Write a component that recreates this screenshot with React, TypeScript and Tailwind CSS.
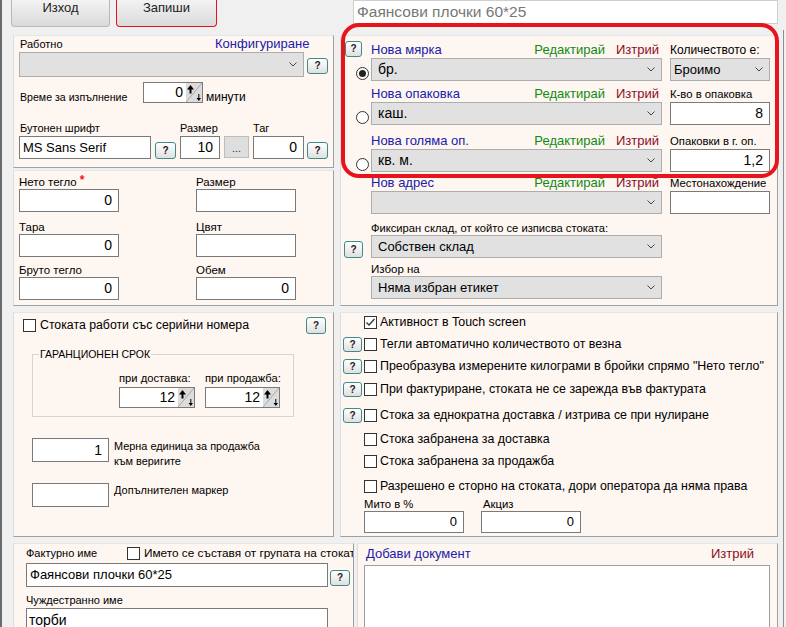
import React from 'react'

const FONT = "font-['Liberation_Sans',Arial,sans-serif]"
const BLUE = 'text-[#2020a8]'
const GREEN = 'text-[#128a12]'
const MAROON = 'text-[#8e0d24]'

function Help({ className = '' }: { className?: string }) {
  return (
    <div
      className={`flex shrink-0 items-center justify-center rounded-[3px] border border-[#3d8b8b] bg-linear-to-b from-white to-[#e0e0e0] text-[10px] font-bold leading-none text-[#222] ${className}`}
    >
      ?
    </div>
  )
}

function Chevron() {
  return (
    <svg width="8" height="5" viewBox="0 0 8 5" className="shrink-0">
      <path d="M0.5 0.5L4 4L7.5 0.5" fill="none" stroke="#444" strokeWidth="1" />
    </svg>
  )
}

function Select({
  value = '',
  className = '',
  text = 'text-[14px]',
  pad = 'pl-[6px]',
}: {
  value?: string
  className?: string
  text?: string
  pad?: string
}) {
  return (
    <div className={`flex items-center border border-[#adadad] bg-[#e1e1e1] pr-[6px] text-black ${pad} ${className}`}>
      <span className={`flex-1 truncate ${text}`}>{value}</span>
      <Chevron />
    </div>
  )
}

function Field({ value = '', className = '', text = 'text-[13px]' }: { value?: string; className?: string; text?: string }) {
  return (
    <div className={`flex items-center justify-end border border-[#7a7a7a] bg-white pr-[6px] text-black ${text} ${className}`}>
      {value}
    </div>
  )
}

function SpinIcon() {
  return (
    <svg width="16" height="19" viewBox="0 0 16 19" className="shrink-0">
      <rect x="0" y="0" width="16" height="19" fill="#dcdcdc" />
      <path d="M0 19L16 0" stroke="#a8a8a8" strokeWidth="1" />
      <path d="M4.5 2L1 6.5H3.5V10.5H5.5V6.5H8Z" fill="#000" />
      <path d="M12.3 11V15H10.5L12.8 18L15 15H13.3V11Z" fill="#000" />
    </svg>
  )
}

function Spinner({ value, className = '' }: { value: string; className?: string }) {
  return (
    <div className={`flex items-center border border-[#7a7a7a] bg-white ${className}`}>
      <span className="flex-1 pr-[3px] text-right text-[14px] text-black">{value}</span>
      <SpinIcon />
    </div>
  )
}

function Check({ checked = false }: { checked?: boolean }) {
  return (
    <div className="flex h-[13px] w-[13px] shrink-0 items-center justify-center border border-[#333] bg-white">
      {checked && (
        <svg width="11" height="11" viewBox="0 0 11 11">
          <path d="M1.5 5.5L4 8L9.5 2" fill="none" stroke="#333" strokeWidth="1.3" />
        </svg>
      )}
    </div>
  )
}

function Radio({ checked = false }: { checked?: boolean }) {
  return (
    <div className="flex h-[13px] w-[13px] shrink-0 items-center justify-center rounded-full border border-[#333] bg-white">
      {checked && <div className="h-[7px] w-[7px] rounded-full bg-[#222]" />}
    </div>
  )
}

function Panel({ className = '', children }: { className?: string; children?: React.ReactNode }) {
  return (
    <div
      className={`border border-t-[#e6e6e6] border-l-[#dcdcdc] border-r-[#a0a0a0] border-b-[#a0a0a0] bg-[#fdf6f1] ${className}`}
    >
      {children}
    </div>
  )
}

function UnitLabels({ name, right, helpCell, rightSize = 'text-[11.3px]' }: { name: string; right: string; helpCell?: boolean; rightSize?: string }) {
  return (
    <div className="flex h-[16px]">
      <div className="w-[30px]">{helpCell && <Help className="ml-[4px] mt-[-1px] h-[16px] w-[17px]" />}</div>
      <div className="flex w-[291px] leading-[16px]">
        <span className={`flex-1 text-[13px] ${BLUE}`}>{name}</span>
        <span className={`text-[13px] ${GREEN}`}>Редактирай</span>
        <span className={`ml-[11px] mr-[3px] text-[13px] ${MAROON}`}>Изтрий</span>
      </div>
      <div className={`ml-[8px] w-[100px] whitespace-nowrap leading-[16px] text-black ${rightSize}`}>{right}</div>
    </div>
  )
}

function UnitControls({ value, checked, right, radio = true }: { value: string; checked?: boolean; right: React.ReactNode; radio?: boolean }) {
  return (
    <div className="flex h-[23px]">
      <div className="flex w-[30px] items-end pb-[1px] pl-[15px]">{radio && <Radio checked={checked} />}</div>
      <Select value={value} className="h-[23px] w-[291px]" />
      <div className="ml-[8px] w-[100px]">{right}</div>
    </div>
  )
}

function CheckRow({ text, help, checked, className = '' }: { text: string; help?: boolean; checked?: boolean; className?: string }) {
  return (
    <div className={`flex h-[13px] items-center ${className}`}>
      <div className="flex w-[23px] items-center pl-[2px]">{help && <Help className="h-[15px] w-[19px]" />}</div>
      <Check checked={checked} />
      <span className="ml-[3px] whitespace-nowrap text-[12.4px] leading-none text-black">{text}</span>
    </div>
  )
}

export default function App() {
  return (
    <div className={`flex h-[627px] w-[786px] overflow-hidden bg-[#f0f0f0] text-black ${FONT}`}>
      <div className="w-[2px] shrink-0 bg-[#6b6b6b]" />
      <div className="relative w-[776px] shrink-0">
        {/* top bar */}
        <div className="flex h-[35px] items-start">
          <div className="ml-[9px] flex h-[27px] w-[99px] justify-center rounded-b-[4px] border border-t-0 border-[#b8b8b8] bg-linear-to-b from-[#f3f3f3] to-[#dadada] pt-[1px] text-[13px] leading-[14px] text-[#222]">
            Изход
          </div>
          <div className="ml-[6px] flex h-[27px] w-[101px] justify-center rounded-b-[4px] border border-t-0 border-[#e81123] bg-linear-to-b from-[#f3f3f3] to-[#dadada] pt-[1px] text-[13px] leading-[14px] text-[#222]">
            Запиши
          </div>
          <div className="ml-[136px] flex h-[24px] w-[425px] items-center border border-[#cfcfcf] bg-white pl-[3px] text-[15.5px] text-[#777]">
            Фаянсови плочки 60*25
          </div>
        </div>

        <div className="flex">
          {/* left column */}
          <div className="ml-[11px] flex w-[321px] flex-col">
            <Panel className="h-[133px]">
              <div className="flex h-[16px] pl-[6px] leading-[16px]">
                <span className="w-[195px] text-[11px]">Работно</span>
                <span className={`text-[13px] ${BLUE}`}>Конфигуриране</span>
              </div>
              <div className="flex items-start">
                <Select className="ml-[5px] h-[25px] w-[285px]" />
                <Help className="ml-[3px] mt-[6px] h-[16px] w-[21px]" />
              </div>
              <div className="mt-[5px] flex h-[21px] items-end">
                <span className="w-[129px] pl-[6px] text-[10.6px] leading-[12px]">Време за изпълнение</span>
                <Spinner value="0" className="h-[21px] w-[60px]" />
                <span className="ml-[3px] text-[12px] leading-[12px]">минути</span>
              </div>
              <div className="mt-[18px] flex h-[14px] pl-[6px] text-[11px] leading-[14px]">
                <span className="w-[160px]">Бутонен шрифт</span>
                <span className="w-[73px]">Размер</span>
                <span>Таг</span>
              </div>
              <div className="mt-[1px] flex h-[23px] items-end">
                <div className="ml-[5px] flex h-[23px] w-[132px] items-center border border-[#7a7a7a] bg-white pl-[3px] text-[13px]">
                  MS Sans Serif
                </div>
                <Help className="ml-[4px] h-[17px] w-[21px]" />
                <Field value="10" text="text-[14px]" className="ml-[4px] h-[23px] w-[40px]" />
                <div className="mb-[1px] ml-[4px] flex h-[22px] w-[25px] items-end justify-center border border-[#bdbdbd] bg-[#dedede] pb-[3px] text-[11px] leading-none text-[#333]">
                  ...
                </div>
                <Field value="0" text="text-[14px]" className="ml-[4px] h-[23px] w-[51px]" />
                <Help className="ml-[3px] h-[17px] w-[21px]" />
              </div>
            </Panel>

            <Panel className="mt-[2px] h-[136px] pt-[4px]">
              {[
                ['Нето тегло', '0', 'Размер', ''],
                ['Тара', '0', 'Цвят', ''],
                ['Бруто тегло', '0', 'Обем', '0'],
              ].map((row, i) => (
                <div key={row[0]} className={`flex ${i === 1 ? 'mt-[8px]' : i === 2 ? 'mt-[6px]' : ''}`}>
                  <div className="flex w-[182px] flex-col pl-[5px]">
                    <span className="h-[14px] text-[11.5px] leading-[14px]">
                      {row[0]}
                      {i === 0 && <span className="ml-[3px] align-top text-[12px] font-bold leading-[10px] text-[#f01818]">*</span>}
                    </span>
                    <Field value={row[1]} text="text-[14px]" className="h-[23px] w-[100px]" />
                  </div>
                  <div className="flex flex-col">
                    <span className="h-[14px] text-[11.5px] leading-[14px]">{row[2]}</span>
                    <Field value={row[3]} text="text-[14px]" className="h-[23px] w-[100px]" />
                  </div>
                </div>
              ))}
            </Panel>

            <Panel className="mt-[6px] h-[225px]">
              <div className="mt-[4px] flex h-[17px] items-center">
                <div className="ml-[9px]">
                  <Check />
                </div>
                <span className="ml-[4px] text-[12.3px]">Стоката работи със серийни номера</span>
                <Help className="ml-auto mr-[7px] h-[17px] w-[20px]" />
              </div>
              <fieldset className="ml-[18px] mt-[13px] w-[262px] border border-[#d4d4d4] pb-[8px]">
                <legend className="ml-[6px] px-[1px] text-[10.5px] leading-[14px]">ГАРАНЦИОНЕН СРОК</legend>
                <div className="mt-[10px] flex">
                  <div className="ml-[86px] flex w-[76px] flex-col">
                    <span className="h-[14px] whitespace-nowrap text-[11.2px] leading-[14px]">при доставка:</span>
                    <Spinner value="12" className="mt-[2px] h-[21px]" />
                  </div>
                  <div className="ml-[10px] flex w-[75px] flex-col">
                    <span className="h-[14px] whitespace-nowrap text-[11.2px] leading-[14px]">при продажба:</span>
                    <Spinner value="12" className="mt-[2px] h-[21px]" />
                  </div>
                </div>
              </fieldset>
              <div className="mt-[21px] flex items-start">
                <Field value="1" text="text-[14px]" className="ml-[18px] h-[24px] w-[77px]" />
                <span className="ml-[5px] mt-[1px] text-[10.9px] leading-[15px]">
                  Мерна единица за продажба
                  <br />
                  към веригите
                </span>
              </div>
              <div className="mt-[14px] flex items-start">
                <Field className="ml-[18px] h-[24px] w-[77px]" />
                <span className="ml-[5px] text-[11px] leading-[15px]">Допълнителен маркер</span>
              </div>
            </Panel>
          </div>

          {/* right column */}
          <div className="ml-[6px] flex w-[438px] flex-col">
            <Panel className="h-[271px] pt-[6px]">
              <UnitLabels name="Нова мярка" right="Количеството е:" rightSize="text-[12px]" helpCell />
              <UnitControls
                value="бр."
                checked
                right={<Select value="Броимо" text="text-[13px]" pad="pl-[3px]" className="h-[23px] w-[100px]" />}
              />
              <div className="mt-[5px]">
                <UnitLabels name="Нова опаковка" right="К-во в опаковка" />
              </div>
              <UnitControls value="каш." right={<Field value="8" text="text-[14px]" className="h-[23px] w-[100px]" />} />
              <div className="mt-[8px]">
                <UnitLabels name="Нова голяма оп." right="Опаковки в г. оп." />
              </div>
              <UnitControls value="кв. м." right={<Field value="1,2" text="text-[14px]" className="h-[23px] w-[100px]" />} />
              <div className="mt-[3px]">
                <UnitLabels name="Нов адрес" right="Местонахождение" />
              </div>
              <UnitControls value="" radio={false} right={<Field className="h-[23px] w-[100px]" />} />
              <div className="mt-[7px] h-[14px] pl-[30px] text-[11.2px] leading-[14px]">Фиксиран склад, от който се изписва стоката:</div>
              <div className="flex h-[23px]">
                <div className="flex w-[30px] items-end pl-[3px]">
                  <Help className="h-[17px] w-[19px]" />
                </div>
                <Select value="Собствен склад" text="text-[13px]" className="h-[23px] w-[291px]" />
              </div>
              <div className="mt-[4px] h-[14px] pl-[30px] text-[11.5px] leading-[14px]">Избор на</div>
              <div className="flex h-[23px] pl-[30px]">
                <Select value="Няма избран етикет" text="text-[13px]" className="h-[23px] w-[291px]" />
              </div>
            </Panel>

            <Panel className="mt-[6px] h-[225px] pt-[3px]">
              <CheckRow text="Активност в Touch screen" checked />
              <CheckRow className="mt-[9px]" help text="Тегли автоматично количеството от везна" />
              <CheckRow className="mt-[9px]" help text={'Преобразува измерените килограми в бройки спрямо "Нето тегло"'} />
              <CheckRow className="mt-[10px]" help text="При фактуриране, стоката не се зарежда във фактурата" />
              <CheckRow className="mt-[13px]" help text="Стока за еднократна доставка / изтрива се при нулиране" />
              <CheckRow className="mt-[11px]" text="Стока забранена за доставка" />
              <CheckRow className="mt-[9px]" text="Стока забранена за продажба" />
              <CheckRow className="mt-[12px]" text="Разрешено е сторно на стоката, дори оператора да няма права" />
              <div className="mt-[4px] flex pl-[23px]">
                <div className="flex w-[117px] flex-col">
                  <span className="h-[14px] text-[11.3px] leading-[14px]">Мито в %</span>
                  <Field value="0" className="h-[22px] w-[100px]" />
                </div>
                <div className="flex flex-col">
                  <span className="h-[14px] pl-[2px] text-[11.3px] leading-[14px]">Акциз</span>
                  <Field value="0" className="h-[22px] w-[100px]" />
                </div>
              </div>
            </Panel>
          </div>
        </div>

        {/* bottom row */}
        <div className="mt-[6px] flex">
          <Panel className="ml-[11px] h-[100px] w-[341px] overflow-hidden pt-[3px]">
            <div className="flex h-[13px] items-end pl-[12px]">
              <span className="w-[101px] shrink-0 text-[11px] leading-[13px]">Фактурно име</span>
              <Check />
              <span className="ml-[4px] whitespace-nowrap text-[11.8px] leading-[13px]">Името се съставя от групата на стокат</span>
            </div>
            <div className="mt-[3px] flex items-end">
              <div className="ml-[12px] flex h-[24px] w-[302px] items-center border border-[#7a7a7a] bg-white pl-[3px] text-[13px]">
                Фаянсови плочки 60*25
              </div>
              <Help className="mb-[1px] ml-[2px] h-[16px] w-[20px]" />
            </div>
            <div className="mt-[7px] h-[13px] pl-[12px] text-[11px] leading-[13px]">Чуждестранно име</div>
            <div className="ml-[12px] mt-[1px] flex h-[30px] w-[302px] items-start border border-[#7a7a7a] bg-white pl-[2px] pt-[2px] text-[14px] leading-[18px]">
              торби
            </div>
          </Panel>
          <Panel className="ml-[3px] h-[100px] w-[421px] pt-[1px]">
            <div className="flex h-[18px] items-center pl-[8px] pr-[23px] leading-[18px]">
              <span className={`flex-1 text-[13px] ${BLUE}`}>Добави документ</span>
              <span className={`text-[13px] ${MAROON}`}>Изтрий</span>
            </div>
            <div className="ml-[6px] mt-[2px] h-[80px] w-[406px] border border-[#a0a0a0] bg-white" />
          </Panel>
        </div>

        {/* red highlight annotation */}
        <div className="pointer-events-none absolute left-[339px] top-[23px] h-[155px] w-[438px] rounded-[18px] border-[4px] border-[#e8141c]" />
      </div>
      <div className="flex w-[8px] shrink-0">
        <div className="ml-[5px] mt-[30px] w-[1px] bg-[#8a8e95]" />
      </div>
    </div>
  )
}
